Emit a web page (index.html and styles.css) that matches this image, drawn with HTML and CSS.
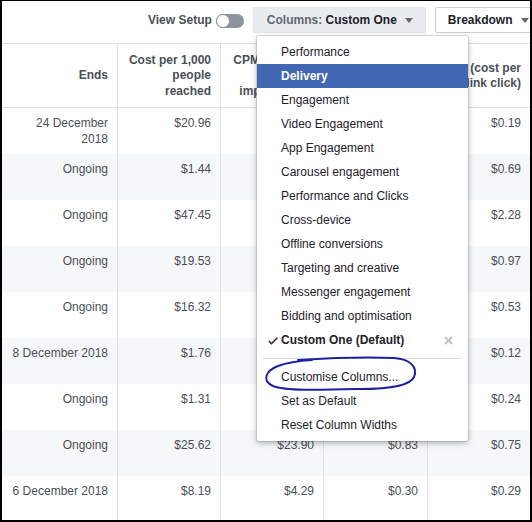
FILE: index.html
```html
<!DOCTYPE html>
<html>
<head>
<meta charset="utf-8">
<link rel="stylesheet" href="styles.css">
</head>
<body>
<div class="frame">
  <div class="toolbar">
    <span class="view-setup">View Setup</span>
    <span class="toggle"><span class="knob"></span></span>
    <div class="btn btn-columns"><span class="muted">Columns:</span>&nbsp;Custom One<span class="caret"></span></div>
    <div class="btn btn-breakdown">Breakdown<span class="caret"></span></div>
  </div>

  <div class="table">
    <div class="row head">
      <div class="cell">Ends</div>
      <div class="cell">Cost per 1,000<br>people<br>reached</div>
      <div class="cell">CPM (cost per<br>1,000<br>impressions)</div>
      <div class="cell">Cost per<br>result</div>
      <div class="cell">CPC (cost per<br>link click)</div>
    </div>
    <div class="row">
      <div class="cell">24 December 2018</div><div class="cell">$20.96</div><div class="cell">$10.22</div><div class="cell">$0.71</div><div class="cell">$0.19</div>
    </div>
    <div class="row alt">
      <div class="cell">Ongoing</div><div class="cell">$1.44</div><div class="cell">$1.20</div><div class="cell">$0.05</div><div class="cell">$0.69</div>
    </div>
    <div class="row">
      <div class="cell">Ongoing</div><div class="cell">$47.45</div><div class="cell">$31.52</div><div class="cell">$1.12</div><div class="cell">$2.28</div>
    </div>
    <div class="row alt">
      <div class="cell">Ongoing</div><div class="cell">$19.53</div><div class="cell">$14.87</div><div class="cell">$0.66</div><div class="cell">$0.97</div>
    </div>
    <div class="row">
      <div class="cell">Ongoing</div><div class="cell">$16.32</div><div class="cell">$11.05</div><div class="cell">$0.48</div><div class="cell">$0.53</div>
    </div>
    <div class="row alt">
      <div class="cell">8 December 2018</div><div class="cell">$1.76</div><div class="cell">$1.42</div><div class="cell">$0.04</div><div class="cell">$0.12</div>
    </div>
    <div class="row">
      <div class="cell">Ongoing</div><div class="cell">$1.31</div><div class="cell">$1.10</div><div class="cell">$0.06</div><div class="cell">$0.24</div>
    </div>
    <div class="row alt">
      <div class="cell">Ongoing</div><div class="cell">$25.62</div><div class="cell">$23.90</div><div class="cell">$0.83</div><div class="cell">$0.75</div>
    </div>
    <div class="row">
      <div class="cell">6 December 2018</div><div class="cell">$8.19</div><div class="cell">$4.29</div><div class="cell">$0.30</div><div class="cell">$0.29</div>
    </div>
  </div>

  <div class="menu">
    <div class="menu-item">Performance</div>
    <div class="menu-item active">Delivery</div>
    <div class="menu-item">Engagement</div>
    <div class="menu-item">Video Engagement</div>
    <div class="menu-item">App Engagement</div>
    <div class="menu-item">Carousel engagement</div>
    <div class="menu-item">Performance and Clicks</div>
    <div class="menu-item">Cross-device</div>
    <div class="menu-item">Offline conversions</div>
    <div class="menu-item">Targeting and creative</div>
    <div class="menu-item">Messenger engagement</div>
    <div class="menu-item">Bidding and optimisation</div>
    <div class="menu-item checked">
      <svg class="check" width="10" height="8" viewBox="0 0 10 8"><polyline points="0.8,4 3.5,6.8 9.3,0.8" fill="none" stroke="#1d2129" stroke-width="1.4"/></svg>
      Custom One (Default)
      <svg class="remove" width="9" height="9" viewBox="0 0 9 9"><path d="M1 1 L8 8 M8 1 L1 8" stroke="#bec3c9" stroke-width="2" fill="none"/></svg>
    </div>
    <div class="divider"></div>
    <div class="menu-item">Customise Columns...</div>
    <div class="menu-item">Set as Default</div>
    <div class="menu-item">Reset Column Widths</div>
  </div>

  <svg class="annot" width="532" height="522" viewBox="0 0 532 522">
    <path d="M298 360 C330 358 370 357 394 358 C410 359 418 367 414 377 C410 386 390 389 360 389 C320 390 285 391 273 386 C262 381 265 371 278 366 C286 363 296 361 312 360" fill="none" stroke="#1c22a0" stroke-width="2" stroke-linecap="round"/>
  </svg>
</div>
</body>
</html>
```

FILE: styles.css
```css
* { box-sizing: border-box; }

body {
  margin: 0;
  font-family: "Liberation Sans", Arial, sans-serif;
  font-size: 12px;
  background: #fff;
}

.frame {
  position: relative;
  width: 532px;
  height: 522px;
  border: 2px solid #000;
  border-top-width: 1px;
  overflow: hidden;
  background: #fff;
}

.toolbar {
  height: 42px;
  display: flex;
  align-items: flex-start;
  padding: 6px 0 0 146px;
}

.view-setup {
  font-weight: bold;
  color: #4b4f56;
  line-height: 26px;
  margin-right: 4px;
  white-space: nowrap;
}

.toggle {
  position: relative;
  flex-shrink: 0;
  width: 28px;
  height: 14px;
  border-radius: 7px;
  background: #8d949e;
  margin-top: 7px;
  margin-right: 9px;
}

.knob {
  position: absolute;
  left: 0;
  top: 0;
  width: 14px;
  height: 14px;
  border-radius: 50%;
  background: #fff;
  border: 1px solid #8d949e;
}

.btn {
  height: 26px;
  display: flex;
  align-items: center;
  flex-shrink: 0;
  font-weight: bold;
  white-space: nowrap;
  border-radius: 2px;
  color: #1d2129;
}

.btn-columns {
  background: #e9ebee;
  border: 1px solid #e4e6ea;
  padding: 0 12px 0 13px;
  margin-right: 9px;
}

.muted { color: #606770; }

.btn-breakdown {
  background: #fff;
  border: 1px solid #ccd0d5;
  padding: 0 12px;
}

.caret {
  width: 0;
  height: 0;
  border-left: 4.5px solid transparent;
  border-right: 4.5px solid transparent;
  border-top: 5px solid #606770;
  margin-left: 8px;
}

.row {
  display: grid;
  grid-template-columns: 116px 103px 103px 104px 1fr;
  height: 46px;
}

.row.alt { background: #f6f7f9; }

.cell {
  border-right: 1px solid #dddfe2;
  padding: 7px 9px 0 8px;
  text-align: right;
  line-height: 16px;
  color: #4b4f56;
}

.cell:last-child { border-right: 0; }

.head {
  height: 65px;
  border-top: 1px solid #dddfe2;
  border-bottom: 1px solid #dddfe2;
}

.head .cell {
  display: flex;
  align-items: center;
  justify-content: flex-end;
  padding-top: 1px;
  font-weight: bold;
  line-height: 15.5px;
}

.menu {
  position: absolute;
  left: 255px;
  top: 35px;
  width: 211px;
  padding: 4px 0;
  background: #fff;
  border-radius: 2px;
  box-shadow: 0 0 0 1px rgba(0, 0, 0, 0.1), 0 2px 6px rgba(0, 0, 0, 0.3);
  z-index: 2;
}

.menu-item {
  position: relative;
  height: 24px;
  line-height: 24px;
  padding-left: 24px;
  color: #1d2129;
  white-space: nowrap;
}

.menu-item.active {
  background: #4267b2;
  color: #fff;
  font-weight: bold;
}

.menu-item.checked { font-weight: bold; }

.check {
  position: absolute;
  left: 11px;
  top: 9px;
}

.remove {
  position: absolute;
  right: 15px;
  top: 8px;
}

.divider {
  height: 1px;
  background: #dddfe2;
  margin: 6px 6px;
}

.annot {
  position: absolute;
  top: -1px;
  left: -2px;
  pointer-events: none;
  z-index: 3;
}
```
